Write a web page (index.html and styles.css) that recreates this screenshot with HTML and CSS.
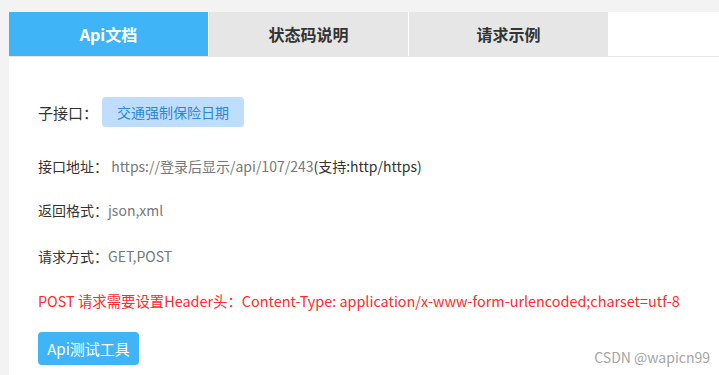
FILE: index.html
```html
<!DOCTYPE html>
<html lang="zh-CN">
<head>
    <meta charset="UTF-8">
    <meta name="viewport" content="width=device-width, initial-scale=1.0">
    <title>Api文档</title>
    <link rel="stylesheet" href="styles.css">
</head>
<body>
    <div class="panel">
        <div class="tabs">
            <div class="tab active">Api文档</div>
            <div class="tab">状态码说明</div>
            <div class="tab">请求示例</div>
        </div>

        <div class="content">
            <div class="row sub-api">
                <span class="label-big">子接口：</span>
                <span class="badge">交通强制保险日期</span>
            </div>

            <div class="row">
                <span class="label">接口地址：</span>
                <span class="value">&nbsp;https://登录后显示/api/107/243</span><span class="dark">(支持:http/https)</span>
            </div>

            <div class="row">
                <span class="label">返回格式：</span><span class="value">json,xml</span>
            </div>

            <div class="row">
                <span class="label">请求方式：</span><span class="value">GET,POST</span>
            </div>

            <div class="row warn">POST 请求需要设置Header头：Content-Type: application/x-www-form-urlencoded;charset=utf-8</div>

            <div class="row btn-row">
                <button class="test-btn">Api测试工具</button>
            </div>
        </div>
    </div>
    <div class="watermark">CSDN @wapicn99</div>
</body>
</html>
```

FILE: styles.css
```css
* {
    box-sizing: border-box;
    margin: 0;
    padding: 0;
}

body {
    font-family: "Microsoft YaHei", "Noto Sans CJK SC", sans-serif;
    background: #f3f3f3;
    color: #333;
    padding: 12px 0 0 9px;
    height: 375px;
    overflow: hidden;
    position: relative;
}

.panel {
    background: #fff;
    height: 363px;
}

.tabs {
    display: flex;
    gap: 1px;
    border-bottom: 1px solid #e6e6e6;
    height: 45px;
}

.tab {
    width: 199px;
    height: 44px;
    background: #e6e6e6;
    display: flex;
    align-items: center;
    justify-content: center;
    font-size: 16px;
    font-weight: 700;
    color: #333;
}

.tab.active {
    background: #3fb5f7;
    color: #fff;
}

.content {
    padding: 40px 0 0 29px;
}

.row {
    display: flex;
    align-items: center;
    font-size: 14px;
    height: 20px;
    margin-bottom: 24px;
}

.sub-api {
    height: 30px;
    margin-bottom: 29px;
}

.label-big {
    font-size: 15px;
    margin-right: 4px;
}

.badge {
    background: #bfdefd;
    color: #2a86d8;
    font-size: 14px;
    border-radius: 4px;
    height: 30px;
    padding: 0 15px;
    display: flex;
    align-items: center;
}

.label {
    color: #333;
}

.value {
    color: #777;
    font-size: 14px;
}

.dark {
    color: #333;
    font-size: 14px;
}

.row + .row:nth-child(3) {
    margin-bottom: 26px;
}

.warn {
    color: #ff2b2b;
    font-size: 14.4px;
    margin-bottom: 22px;
}

.btn-row {
    height: 33px;
}

.test-btn {
    font-family: inherit;
    background: #3fb5f7;
    color: #fff;
    border: none;
    border-radius: 4px;
    font-size: 15px;
    width: 101px;
    height: 33px;
}

.watermark {
    position: absolute;
    right: 9px;
    bottom: 8px;
    font-size: 14px;
    color: #a5a5a5;
}
```
